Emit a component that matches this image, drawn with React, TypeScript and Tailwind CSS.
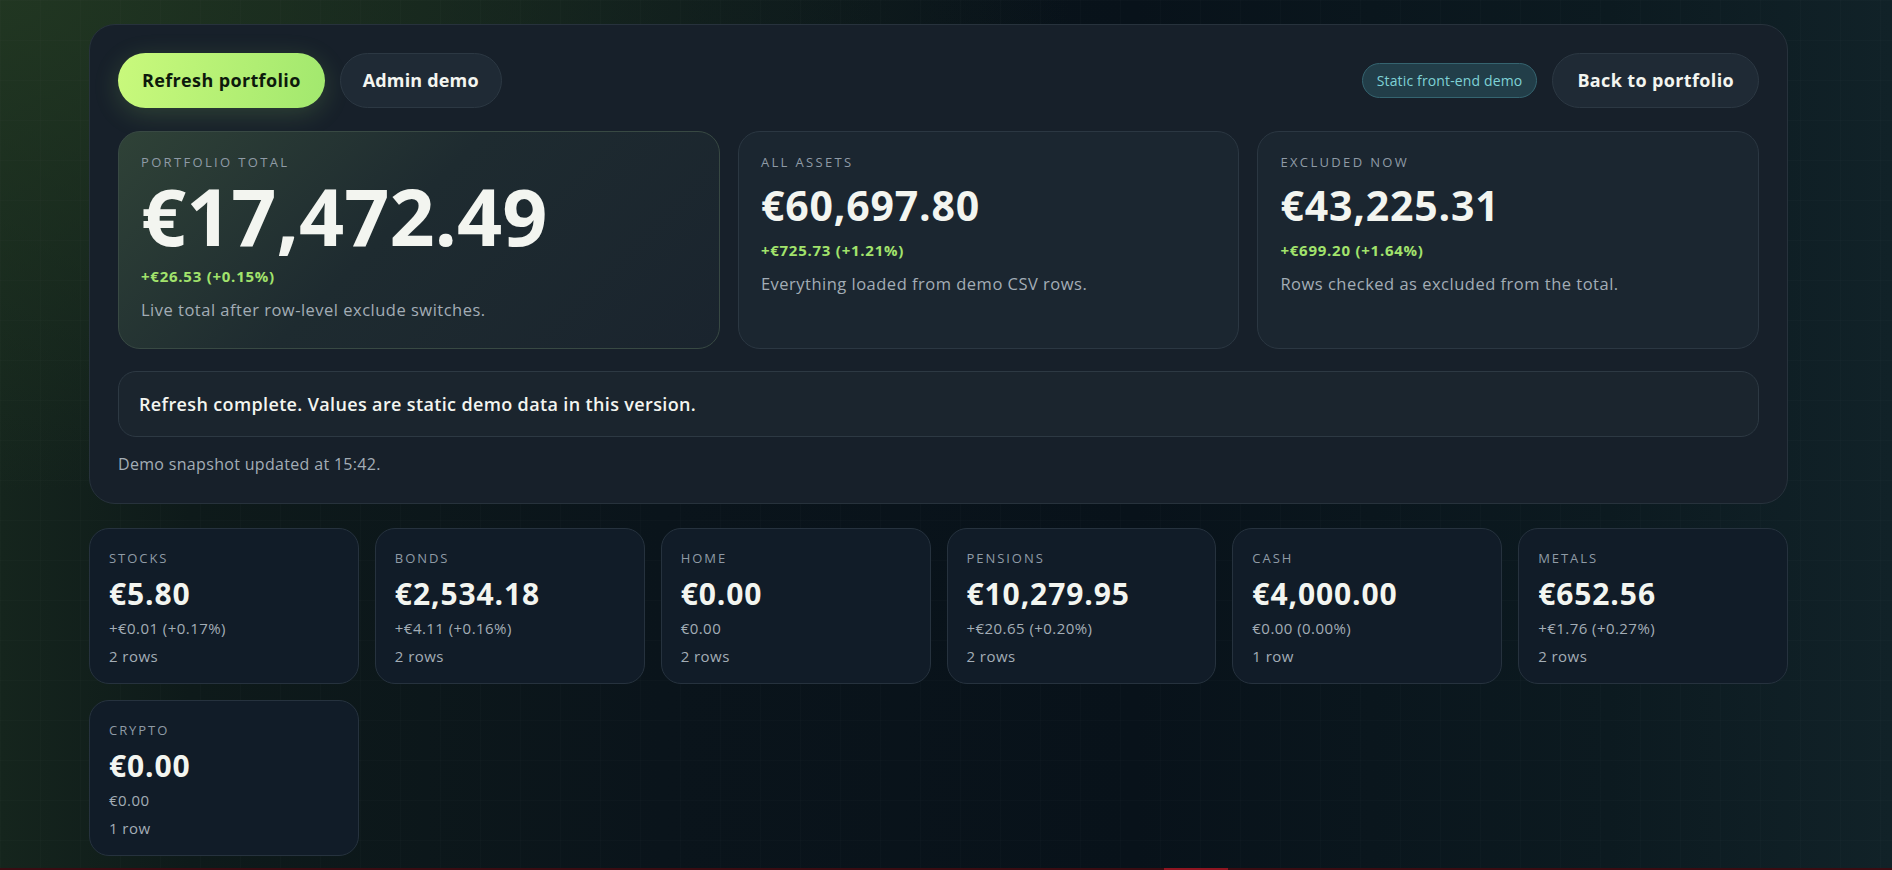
const categories = [
  { label: 'Stocks', value: '€5.80', change: '+€0.01 (+0.17%)', rows: '2 rows' },
  { label: 'Bonds', value: '€2,534.18', change: '+€4.11 (+0.16%)', rows: '2 rows' },
  { label: 'Home', value: '€0.00', change: '€0.00', rows: '2 rows' },
  { label: 'Pensions', value: '€10,279.95', change: '+€20.65 (+0.20%)', rows: '2 rows' },
  { label: 'Cash', value: '€4,000.00', change: '€0.00 (0.00%)', rows: '1 row' },
  { label: 'Metals', value: '€652.56', change: '+€1.76 (+0.27%)', rows: '2 rows' },
  { label: 'Crypto', value: '€0.00', change: '€0.00', rows: '1 row' },
]

function StatCard({
  label,
  value,
  change,
  note,
}: {
  label: string
  value: string
  change: string
  note: string
}) {
  return (
    <div className="rounded-[22px] border border-[#2b3742] bg-[#1b2630] px-[22px] pt-[22px] pb-[26px]">
      <div className="text-[13px] leading-4 uppercase tracking-[0.18em] text-[#8f9ba6]">{label}</div>
      <div className="mt-[15px] text-[41px] leading-[40px] font-bold tracking-[0.02em] text-[#f3f5f0]">{value}</div>
      <div className="mt-[15px] text-[15px] leading-5 font-bold tracking-[0.05em] text-[#a2e36c]">{change}</div>
      <div className="mt-3 text-[16.5px] leading-6 tracking-[0.03em] text-[#a3adb6]">{note}</div>
    </div>
  )
}

export default function App() {
  return (
    <div
      className="relative h-screen overflow-hidden bg-[#0a131a] text-white"
      style={{ fontFamily: '"Open Sans", "Noto Sans", sans-serif' }}
    >
      {/* background glow + faint grid */}
      <div className="h-full bg-[radial-gradient(ellipse_at_0%_0%,rgba(34,56,34,0.9),transparent_40%),linear-gradient(90deg,#15251d_0%,#0e1a1a_10%,#0a141b_35%,#08121a_60%,#0c1a20_85%,#112228_100%)]">
        <div className="h-full bg-[linear-gradient(rgba(255,255,255,0.012)_1px,transparent_1px),linear-gradient(90deg,rgba(255,255,255,0.012)_1px,transparent_1px)] bg-[size:40px_40px] pl-[89px] pr-[104px] pt-6">
          {/* Summary panel */}
          <section className="rounded-[26px] border border-[#27323c] bg-[#17202a] p-7">
            <div className="flex items-center justify-between">
              <div className="flex items-center gap-[15px]">
                <button className="h-[55px] rounded-full bg-[linear-gradient(100deg,#c9f97c,#a2e86e)] px-6 text-[18px] font-bold tracking-[0.02em] text-[#0d1a0c] shadow-[0_6px_26px_rgba(160,230,110,0.18)]">
                  Refresh portfolio
                </button>
                <button className="h-[55px] rounded-full border border-[#2c3843] bg-[#1f2a35] px-[22px] text-[18px] font-bold tracking-[0.01em] text-[#f3f5f0]">
                  Admin demo
                </button>
              </div>
              <div className="flex items-center gap-[15px]">
                <span className="flex h-[35px] items-center rounded-full border border-[#356470] bg-[#223e49] px-[14px] text-[14px] tracking-[0.01em] text-[#7fd2d6]">
                  Static front-end demo
                </span>
                <button className="h-[55px] rounded-full border border-[#2c3843] bg-[#1f2a35] px-6 text-[18px] font-bold tracking-[0.02em] text-[#f3f5f0]">
                  Back to portfolio
                </button>
              </div>
            </div>

            <div className="mt-[23px] grid grid-cols-[1.2fr_1fr_1fr] gap-[18px]">
              <div className="rounded-[22px] border border-[#384943] bg-[linear-gradient(135deg,#2f4237_0%,#1e2b30_45%,#1a242e_100%)] px-[22px] pt-[22px] pb-[26px]">
                <div className="text-[13px] leading-4 uppercase tracking-[0.18em] text-[#8f9ba6]">Portfolio total</div>
                <div className="mt-2 text-[79px] leading-[76px] font-bold text-[#f3f5f0]">€17,472.49</div>
                <div className="mt-3 text-[15px] leading-5 font-bold tracking-[0.05em] text-[#a2e36c]">+€26.53 (+0.15%)</div>
                <div className="mt-3 text-[16.5px] leading-6 tracking-[0.03em] text-[#a3adb6]">Live total after row-level exclude switches.</div>
              </div>
              <StatCard
                label="All assets"
                value="€60,697.80"
                change="+€725.73 (+1.21%)"
                note="Everything loaded from demo CSV rows."
              />
              <StatCard
                label="Excluded now"
                value="€43,225.31"
                change="+€699.20 (+1.64%)"
                note="Rows checked as excluded from the total."
              />
            </div>

            <div className="mt-[22px] rounded-[18px] border border-[#2d3943] bg-[#1b252e] px-5 py-5 text-[18px] leading-6 font-semibold tracking-[0.02em] text-[#f3f5f0]">
              Refresh complete. Values are static demo data in this version.
            </div>

            <p className="mt-4 text-[16px] leading-[22px] tracking-[0.02em] text-[#a3adb6]">Demo snapshot updated at 15:42.</p>
          </section>

          {/* Category cards */}
          <div className="mt-6 grid grid-cols-6 gap-4">
            {categories.map((c) => (
              <div
                key={c.label}
                className="h-[156px] rounded-[20px] border border-[#26323e] bg-[#111c28] px-[19px] pt-[21px]"
              >
                <div className="text-[13px] leading-4 uppercase tracking-[0.15em] text-[#8f9ba6]">{c.label}</div>
                <div className="mt-3 text-[30px] leading-8 font-bold tracking-[0.03em] text-[#f3f5f0]">{c.value}</div>
                <div className="mt-2 text-[15px] leading-5 tracking-[0.03em] text-[#a3adb6]">{c.change}</div>
                <div className="mt-2 text-[15px] leading-5 tracking-[0.03em] text-[#a3adb6]">{c.rows}</div>
              </div>
            ))}
          </div>
        </div>
      </div>

      {/* bottom edge bar */}
      <div className="fixed bottom-0 left-0 flex h-[2px] w-full bg-[#3a0c12]">
        <div className="ml-[1164px] w-[64px] bg-[#8f1521]" />
      </div>
    </div>
  )
}
